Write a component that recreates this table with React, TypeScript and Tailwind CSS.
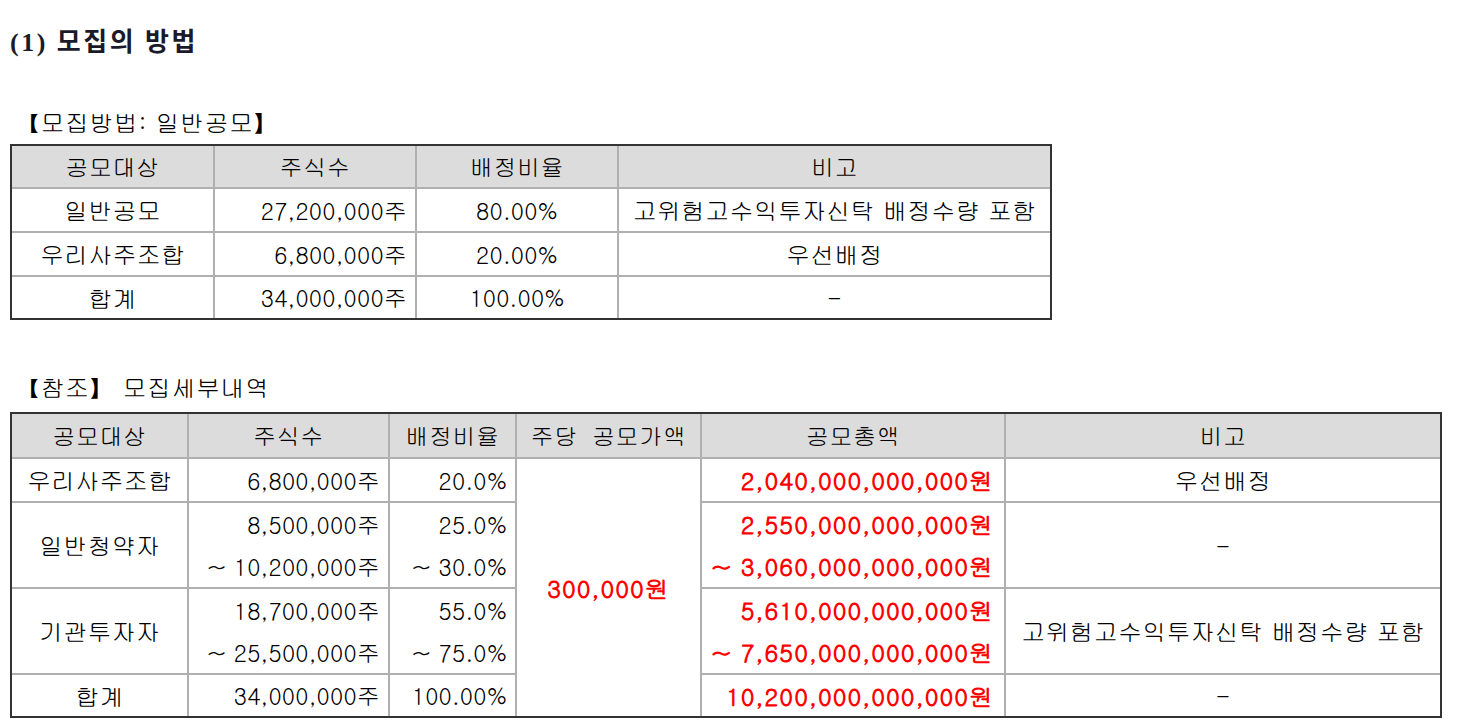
import React from "react";

const KR = "font-['Gulim','Noto_Sans_CJK_KR',sans-serif]";

const th =
  "bg-[#dcdcdc] border-2 border-[#b0b0b0] text-center font-normal text-[23px] leading-none tracking-[0.6px] [word-spacing:6px]";
const td = "border-2 border-[#b0b0b0] text-[23px] leading-none tracking-[0.2px]";
const tdk = "border-2 border-[#b0b0b0] text-[24px] leading-none tracking-[0.2px] text-center";
const red = "text-[#ff0000] font-bold text-[24px] tracking-[1px]";

function Two({ a, b, cls = "" }: { a: string; b: string; cls?: string }) {
  return (
    <div className={cls}>
      <div className="h-[42px] flex items-center justify-end">{a}</div>
      <div className="h-[42px] flex items-center justify-end">{b}</div>
    </div>
  );
}

export default function App() {
  return (
    <div className={`bg-white w-[1461px] h-[728px] text-black ${KR} pt-[25px] pl-[10px]`}>
      <div className="h-[34px] flex items-center text-[26px] font-bold text-[#1a1a2a] font-['Liberation_Serif','Noto_Sans_CJK_KR',serif] tracking-[2.5px]">
        (1) 모집의 방법
      </div>
      <div className="h-[32px] mt-[47px] flex items-center pl-[6px] text-[24px] tracking-[0.5px]">
        【모집방법: 일반공모】
      </div>
      <div className="mt-[6px] w-[1042px] border-2 border-[#333333]">
        <table className="border-collapse border-hidden w-full table-fixed">
          <colgroup>
            <col className="w-[202px]" />
            <col className="w-[202px]" />
            <col className="w-[202px]" />
            <col />
          </colgroup>
          <thead>
            <tr className="h-[42px]">
              <th className={th}>공모대상</th>
              <th className={th}>주식수</th>
              <th className={th}>배정비율</th>
              <th className={th}>비고</th>
            </tr>
          </thead>
          <tbody>
            <tr className="h-[44px]">
              <td className={tdk}>일반공모</td>
              <td className={`${td} text-right pr-[8px]`}>27,200,000주</td>
              <td className={`${td} text-center`}>80.00%</td>
              <td className={tdk}>고위험고수익투자신탁 배정수량 포함</td>
            </tr>
            <tr className="h-[44px]">
              <td className={tdk}>우리사주조합</td>
              <td className={`${td} text-right pr-[8px]`}>6,800,000주</td>
              <td className={`${td} text-center`}>20.00%</td>
              <td className={tdk}>우선배정</td>
            </tr>
            <tr className="h-[42px]">
              <td className={tdk}>합계</td>
              <td className={`${td} text-right pr-[8px]`}>34,000,000주</td>
              <td className={`${td} text-center`}>100.00%</td>
              <td className={`${td} text-center`}>-</td>
            </tr>
          </tbody>
        </table>
      </div>

      <div className="h-[32px] mt-[51px] flex items-center pl-[6px] text-[24px] tracking-[0.5px]">
        【참조】 모집세부내역
      </div>
      <div className="mt-[9px] w-[1432px] border-2 border-[#333333]">
        <table className="border-collapse border-hidden w-full table-fixed">
          <colgroup>
            <col className="w-[176px]" />
            <col className="w-[201px]" />
            <col className="w-[127px]" />
            <col className="w-[185px]" />
            <col className="w-[304px]" />
            <col />
          </colgroup>
          <thead>
            <tr className="h-[44px]">
              <th className={th}>공모대상</th>
              <th className={th}>주식수</th>
              <th className={th}>배정비율</th>
              <th className={th}>주당 공모가액</th>
              <th className={th}>공모총액</th>
              <th className={th}>비고</th>
            </tr>
          </thead>
          <tbody>
            <tr className="h-[44px]">
              <td className={tdk}>우리사주조합</td>
              <td className={`${td} text-right pr-[8px]`}>6,800,000주</td>
              <td className={`${td} text-right pr-[8px]`}>20.0%</td>
              <td rowSpan={4} className={`${td} text-center`}>
                <span className={red}>300,000원</span>
              </td>
              <td className={`${td} text-right pr-[10px]`}>
                <span className={red}>2,040,000,000,000원</span>
              </td>
              <td className={tdk}>우선배정</td>
            </tr>
            <tr className="h-[85px]">
              <td className={tdk}>일반청약자</td>
              <td className={`${td} pr-[8px]`}>
                <Two a="8,500,000주" b="~ 10,200,000주" />
              </td>
              <td className={`${td} pr-[8px]`}>
                <Two a="25.0%" b="~ 30.0%" />
              </td>
              <td className={`${td} pr-[10px]`}>
                <Two a="2,550,000,000,000원" b="~ 3,060,000,000,000원" cls={red} />
              </td>
              <td className={`${td} text-center`}>-</td>
            </tr>
            <tr className="h-[85px]">
              <td className={tdk}>기관투자자</td>
              <td className={`${td} pr-[8px]`}>
                <Two a="18,700,000주" b="~ 25,500,000주" />
              </td>
              <td className={`${td} pr-[8px]`}>
                <Two a="55.0%" b="~ 75.0%" />
              </td>
              <td className={`${td} pr-[10px]`}>
                <Two a="5,610,000,000,000원" b="~ 7,650,000,000,000원" cls={red} />
              </td>
              <td className={tdk}>고위험고수익투자신탁 배정수량 포함</td>
            </tr>
            <tr className="h-[42px]">
              <td className={tdk}>합계</td>
              <td className={`${td} text-right pr-[8px]`}>34,000,000주</td>
              <td className={`${td} text-right pr-[8px]`}>100.00%</td>
              <td className={`${td} text-right pr-[10px]`}>
                <span className={red}>10,200,000,000,000원</span>
              </td>
              <td className={`${td} text-center`}>-</td>
            </tr>
          </tbody>
        </table>
      </div>
    </div>
  );
}
